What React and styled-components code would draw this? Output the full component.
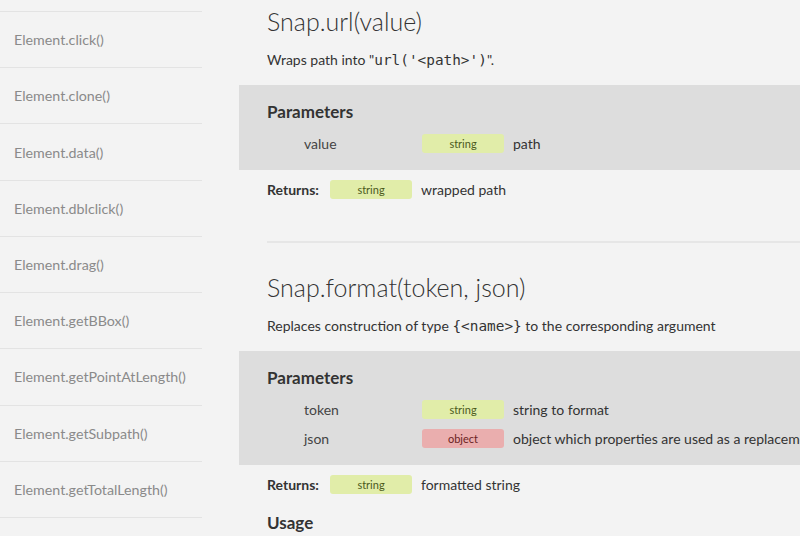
import React from "react";
import styled, { createGlobalStyle } from "styled-components";

const Global = createGlobalStyle`
  html, body { margin: 0; padding: 0; background: #f3f3f3; overflow: hidden; }
  body { font-family: "Lato", "Open Sans", sans-serif; color: #333; }
  * { box-sizing: border-box; }
`;

const Page = styled.div`
  display: flex;
  width: 800px;
  height: 536px;
  overflow: hidden;
  background: #f3f3f3;
`;

const Sidebar = styled.nav`
  width: 239px;
  flex: none;
  padding-top: 11px;
`;

const NavItem = styled.div`
  width: 202px;
  height: 56.22px;
  border-top: 1px solid #e3e3e3;
  display: flex;
  align-items: center;
  padding-left: 14px;
  font-size: 14.25px;
  color: #8a8a8a;
  white-space: nowrap;
`;

const Main = styled.main`
  flex: 1;
  min-width: 0;
  padding-top: 5px;
`;

const Section = styled.section``;

const Title = styled.h2`
  margin: 0 0 13px 28px;
  font-size: 25px;
  font-weight: 300;
  line-height: 32px;
  color: #333;
  white-space: nowrap;
`;

const Desc = styled.p`
  margin: 0 0 15px 28px;
  height: 20px;
  font-size: 14px;
  line-height: 20px;
  white-space: nowrap;
`;

const Code = styled.code`
  font-family: "DejaVu Sans Mono", "Liberation Mono", monospace;
  font-size: 14.4px;
  line-height: 0;
  color: #333;
`;

const ParamBox = styled.div`
  background: #dddddd;
  padding: 16px 0 17px 28px;
  white-space: nowrap;
  overflow: hidden;
`;

const Heading = styled.h3`
  margin: 0;
  font-size: 17px;
  font-weight: 700;
  line-height: 22px;
  color: #333;
`;

const ParamList = styled.div`
  display: flex;
  flex-direction: column;
  gap: 10px;
  margin-top: 11px;
`;

const ParamRow = styled.div`
  display: flex;
  align-items: center;
  height: 19px;
  font-size: 14px;
`;

const ParamName = styled.span`
  width: 155px;
  padding-left: 37px;
  flex: none;
  color: #444;
`;

const Badge = styled.span`
  display: inline-flex;
  align-items: center;
  justify-content: center;
  width: 82px;
  height: 19px;
  border-radius: 3px;
  font-size: 11px;
  flex: none;
  background: ${(p) => (p.$type === "object" ? "#eaaeae" : "#e1eda9")};
  color: ${(p) => (p.$type === "object" ? "#6a1f1f" : "#4b5a1c")};
`;

const ParamDesc = styled.span`
  margin-left: 9px;
  color: #333;
`;

const Returns = styled.div`
  display: flex;
  align-items: center;
  height: 19px;
  margin: 10px 0 0 28px;
  font-size: 14px;
  white-space: nowrap;
`;

const ReturnsLabel = styled.span`
  font-weight: 700;
  width: 63px;
  flex: none;
`;

const Divider = styled.hr`
  margin: 42px 0 28px 28px;
  border: 0;
  height: 2px;
  background: #e6e6e6;
`;

const Usage = styled.h3`
  margin: 18px 0 0 28px;
  font-size: 17px;
  font-weight: 700;
  line-height: 22px;
`;

const nav = [
  "Element.click()",
  "Element.clone()",
  "Element.data()",
  "Element.dblclick()",
  "Element.drag()",
  "Element.getBBox()",
  "Element.getPointAtLength()",
  "Element.getSubpath()",
  "Element.getTotalLength()",
  "Element.hover()",
];

export default function App() {
  return (
    <>
      <Global />
      <Page>
        <Sidebar>
          {nav.map((n) => (
            <NavItem key={n}>{n}</NavItem>
          ))}
        </Sidebar>
        <Main>
          <Section>
            <Title>Snap.url(value)</Title>
            <Desc>
              Wraps path into "<Code>url('&lt;path&gt;')</Code>".
            </Desc>
            <ParamBox>
              <Heading>Parameters</Heading>
              <ParamList>
                <ParamRow>
                  <ParamName>value</ParamName>
                  <Badge $type="string">string</Badge>
                  <ParamDesc>path</ParamDesc>
                </ParamRow>
              </ParamList>
            </ParamBox>
            <Returns>
              <ReturnsLabel>Returns:</ReturnsLabel>
              <Badge $type="string">string</Badge>
              <ParamDesc>wrapped path</ParamDesc>
            </Returns>
          </Section>
          <Divider />
          <Section>
            <Title>Snap.format(token, json)</Title>
            <Desc>
              Replaces construction of type <Code>{"{<name>}"}</Code> to the corresponding argument
            </Desc>
            <ParamBox>
              <Heading>Parameters</Heading>
              <ParamList>
                <ParamRow>
                  <ParamName>token</ParamName>
                  <Badge $type="string">string</Badge>
                  <ParamDesc>string to format</ParamDesc>
                </ParamRow>
                <ParamRow>
                  <ParamName>json</ParamName>
                  <Badge $type="object">object</Badge>
                  <ParamDesc>object which properties are used as a replacement</ParamDesc>
                </ParamRow>
              </ParamList>
            </ParamBox>
            <Returns>
              <ReturnsLabel>Returns:</ReturnsLabel>
              <Badge $type="string">string</Badge>
              <ParamDesc>formatted string</ParamDesc>
            </Returns>
            <Usage>Usage</Usage>
          </Section>
        </Main>
      </Page>
    </>
  );
}
